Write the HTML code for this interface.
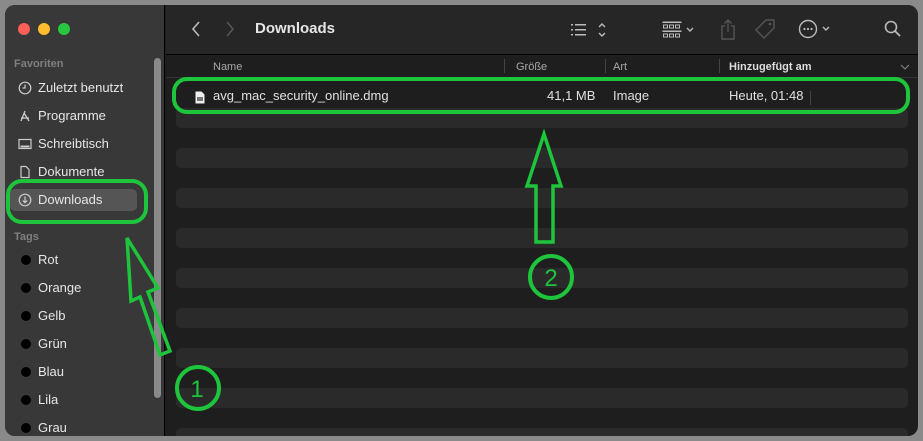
<!DOCTYPE html>
<html><head><meta charset="utf-8">
<style>
*{margin:0;padding:0;box-sizing:border-box}
body{width:923px;height:441px;background:#8a8a8a;font-family:"Liberation Sans",sans-serif;position:relative;overflow:hidden}
.win{position:absolute;left:5px;top:5px;width:913px;height:431px;background:#1e1e1e;border-radius:10px;overflow:hidden}
.side{position:absolute;left:0;top:0;width:160px;height:431px;background:#383838;border-right:1px solid #000}
.tl{position:absolute;top:18px;width:12px;height:12px;border-radius:50%}
.sec{position:absolute;left:9px;font-size:11px;color:#7f7f7f;font-weight:bold}
.it{position:absolute;left:13px;font-size:13px;color:#e6e6e6;height:20px;line-height:20px}
.it .ic{position:absolute;left:0;top:3px;width:14px;height:14px}
.it span{position:absolute;left:20px;white-space:nowrap}
.dot{position:absolute;left:3px;top:5px;width:10px;height:10px;border-radius:50%;background:#000}
.tb{position:absolute;left:161px;top:0;right:0;height:50px;background:#262626;border-bottom:1px solid #000}
.hdr{position:absolute;left:161px;top:51px;right:0;height:21px;font-size:11px;color:#a8a8a8}
.hdr div{position:absolute;top:5px}
.sep{position:absolute;top:3px;width:1px;height:14px;background:#444}
.stripe{position:absolute;left:171px;width:732px;height:20px;background:#2a2a2a;border-radius:5px}
.row{position:absolute;top:83px;font-size:13px;color:#e0e0e0}
</style></head><body>
<div class="win">
 <div class="side">
  <div class="tl" style="left:13px;background:#fe5f57"></div>
  <div class="tl" style="left:33px;background:#febc2e"></div>
  <div class="tl" style="left:53px;background:#28c840"></div>
  <div class="sec" style="top:53px">Favoriten</div>
  <div class="it" style="top:73px"><svg class="ic" viewBox="0 0 14 14"><circle cx="7" cy="7" r="5.8" fill="none" stroke="#ccc" stroke-width="1.2"/><path d="M7 3.5V7H4.5" fill="none" stroke="#ccc" stroke-width="1.2"/></svg><span>Zuletzt benutzt</span></div>
  <div class="it" style="top:101px"><svg class="ic" viewBox="0 0 14 14"><path d="M7 2 3 12M6 4 11 12M3 9H11" stroke="#ccc" stroke-width="1.3" fill="none"/></svg><span>Programme</span></div>
  <div class="it" style="top:129px"><svg class="ic" viewBox="0 0 14 14"><rect x="1" y="2.5" width="12" height="9" fill="none" stroke="#ccc" stroke-width="1.2"/><rect x="2.5" y="8.5" width="9" height="2" fill="#ccc"/></svg><span>Schreibtisch</span></div>
  <div class="it" style="top:157px"><svg class="ic" viewBox="0 0 14 14"><path d="M3 1.5H8L11 4.5V12.5H3Z" fill="none" stroke="#ccc" stroke-width="1.2"/></svg><span>Dokumente</span></div>
  <div style="position:absolute;left:5px;top:184px;width:127px;height:22px;background:#555;border-radius:5px"></div>
  <div class="it" style="top:185px"><svg class="ic" viewBox="0 0 14 14"><circle cx="7" cy="7" r="5.8" fill="none" stroke="#ccc" stroke-width="1.2"/><path d="M7 3.5V9.5M4.8 7.5 7 9.7 9.2 7.5" fill="none" stroke="#ccc" stroke-width="1.2"/></svg><span>Downloads</span></div>
  <div class="sec" style="top:226px">Tags</div>
  <div class="it" style="top:245px"><i class="dot"></i><span>Rot</span></div>
  <div class="it" style="top:273px"><i class="dot"></i><span>Orange</span></div>
  <div class="it" style="top:301px"><i class="dot"></i><span>Gelb</span></div>
  <div class="it" style="top:329px"><i class="dot"></i><span>Grün</span></div>
  <div class="it" style="top:357px"><i class="dot"></i><span>Blau</span></div>
  <div class="it" style="top:385px"><i class="dot"></i><span>Lila</span></div>
  <div class="it" style="top:413px"><i class="dot"></i><span>Grau</span></div>
  <div style="position:absolute;left:149px;top:53px;width:7px;height:340px;background:#8a8a8a;border-radius:4px"></div>
 </div>
 <div class="tb">
  <svg style="position:absolute;left:24px;top:15px" width="12" height="18" viewBox="0 0 12 18"><path d="M9 2 3 9 9 16" fill="none" stroke="#bbb" stroke-width="1.6"/></svg>
  <svg style="position:absolute;left:58px;top:15px" width="12" height="18" viewBox="0 0 12 18"><path d="M3 2 9 9 3 16" fill="none" stroke="#555" stroke-width="1.6"/></svg>
  <div style="position:absolute;left:89px;top:15px;font-size:15px;font-weight:bold;color:#e6e6e6">Downloads</div>
  <svg style="position:absolute;left:404px;top:15px" width="40" height="20" viewBox="0 0 40 20"><g fill="#bbb"><rect x="1" y="4" width="2" height="1.5"/><rect x="1" y="9" width="2" height="1.5"/><rect x="1" y="14" width="2" height="1.5"/><rect x="5" y="4" width="11" height="1.5"/><rect x="5" y="9" width="11" height="1.5"/><rect x="5" y="14" width="11" height="1.5"/></g><path d="M29 7 32 4 35 7M29 13 32 16 35 13" fill="none" stroke="#bbb" stroke-width="1.4"/></svg>
  <svg style="position:absolute;left:496px;top:15px" width="40" height="20" viewBox="0 0 40 20"><g fill="none" stroke="#bbb" stroke-width="1"><rect x="1" y="2" width="18" height="0.5"/><rect x="1.5" y="5" width="4" height="3"/><rect x="7.5" y="5" width="4" height="3"/><rect x="13.5" y="5" width="4" height="3"/><rect x="1" y="11" width="18" height="0.5"/><rect x="1.5" y="14" width="4" height="3"/><rect x="7.5" y="14" width="4" height="3"/><rect x="13.5" y="14" width="4" height="3"/></g><path d="M25 8 28 11 31 8" fill="none" stroke="#bbb" stroke-width="1.4"/></svg>
  <svg style="position:absolute;left:553px;top:12px" width="18" height="24" viewBox="0 0 18 24"><path d="M6 9H3V22H15V9H12M9 15V3M5.5 6.5 9 3 12.5 6.5" fill="none" stroke="#555" stroke-width="1.4"/></svg>
  <svg style="position:absolute;left:588px;top:13px" width="22" height="22" viewBox="0 0 22 22"><path d="M12 2H20V10L10 20 2 12Z" fill="none" stroke="#555" stroke-width="1.4"/><circle cx="16" cy="6" r="1.3" fill="#555"/></svg>
  <svg style="position:absolute;left:631px;top:13px" width="40" height="22" viewBox="0 0 40 22"><circle cx="11" cy="11" r="8.5" fill="none" stroke="#bbb" stroke-width="1.4"/><circle cx="7.5" cy="11" r="1.1" fill="#bbb"/><circle cx="11" cy="11" r="1.1" fill="#bbb"/><circle cx="14.5" cy="11" r="1.1" fill="#bbb"/><path d="M26 9 29 12 32 9" fill="none" stroke="#bbb" stroke-width="1.4"/></svg>
  <svg style="position:absolute;left:717px;top:14px" width="20" height="20" viewBox="0 0 20 20"><circle cx="8" cy="8" r="5.5" fill="none" stroke="#bbb" stroke-width="1.6"/><path d="M12 12 17 17" stroke="#bbb" stroke-width="1.8"/></svg>
 </div>
 <div class="hdr">
  <div style="left:47px">Name</div>
  <span class="sep" style="left:338px"></span>
  <div style="left:350px">Größe</div>
  <span class="sep" style="left:439px"></span>
  <div style="left:447px">Art</div>
  <span class="sep" style="left:553px"></span>
  <div style="left:563px;font-weight:bold;color:#ddd">Hinzugefügt am</div>
  <svg style="position:absolute;left:734px;top:8px" width="10" height="6" viewBox="0 0 10 6"><path d="M1 1 5 5 9 1" fill="none" stroke="#888" stroke-width="1"/></svg>
 </div>
 <div style="position:absolute;left:161px;top:72px;right:0;height:1px;background:#333"></div>
 <div class="stripe" style="top:103px"></div>
 <div class="stripe" style="top:143px"></div>
 <div class="stripe" style="top:183px"></div>
 <div class="stripe" style="top:223px"></div>
 <div class="stripe" style="top:263px"></div>
 <div class="stripe" style="top:303px"></div>
 <div class="stripe" style="top:343px"></div>
 <div class="stripe" style="top:383px"></div>
 <div class="stripe" style="top:423px"></div>
 <svg style="position:absolute;left:190px;top:86px" width="10" height="13" viewBox="0 0 10 13"><path d="M0.5 0.5H6.5L9.5 3.5V12.5H0.5Z" fill="#eee"/><rect x="2" y="6" width="6" height="4" fill="#777"/></svg>
 <div class="row" style="left:208px">avg_mac_security_online.dmg</div>
 <div class="row" style="left:542px">41,1 MB</div>
 <div class="row" style="left:608px">Image</div>
 <div class="row" style="left:724px">Heute, 01:48</div>
 <div style="position:absolute;left:805px;top:86px;width:1px;height:14px;background:#444"></div>
</div>
<svg style="position:absolute;left:0;top:0" width="923" height="441" viewBox="0 0 923 441">
 <g fill="none" stroke="#1ec43c" stroke-width="4" stroke-linejoin="miter">
  <rect x="8" y="181" width="138" height="41" rx="14"/>
  <rect x="174" y="79" width="734" height="33" rx="13"/>
  <path d="M544 134 561 186 553 186 553 242 536 242 536 186 527 186Z" stroke-width="3.5"/>
  <path d="M127 238 158 288 148 292 170 351 160 355 140 297 131 301Z" stroke-width="3.5"/>
  <circle cx="551" cy="277" r="21"/>
  <circle cx="198" cy="388" r="21"/>
 </g>
 <text x="551" y="286" font-family="Liberation Sans,sans-serif" font-size="24" fill="#1ec43c" text-anchor="middle">2</text>
 <text x="197" y="397" font-family="Liberation Sans,sans-serif" font-size="24" fill="#1ec43c" text-anchor="middle">1</text>
</svg>
</body></html>
